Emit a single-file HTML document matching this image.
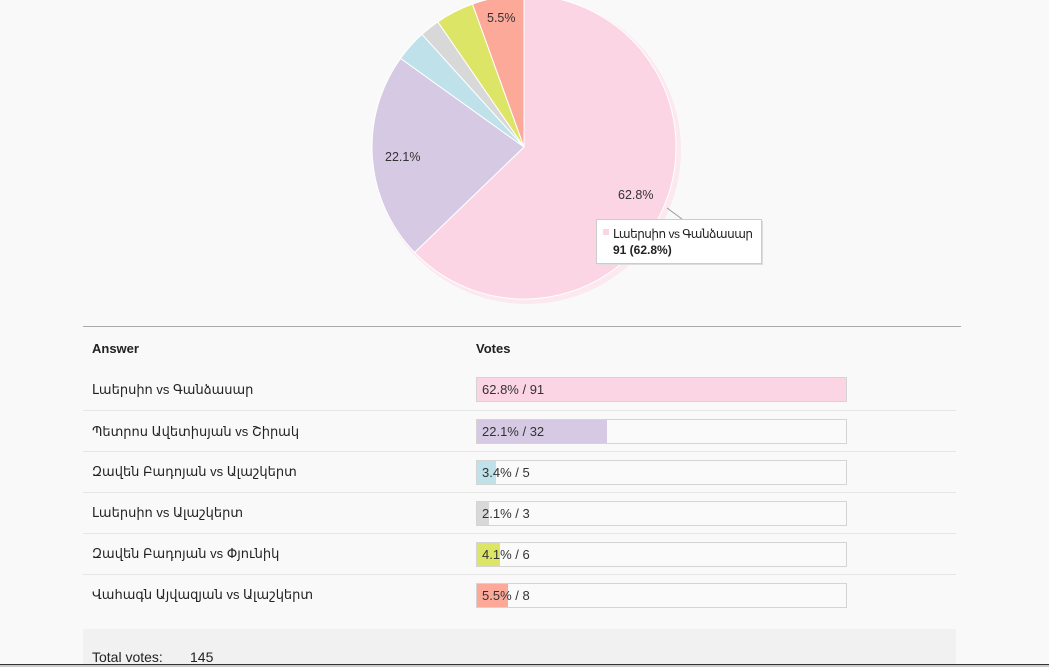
<!DOCTYPE html>
<html><head><meta charset="utf-8"><style>
body{margin:0;width:1049px;height:667px;background:#f9f9f9;overflow:hidden;position:relative;font-family:"Liberation Sans","DejaVu Sans",sans-serif;color:#222}
.a{position:absolute}
.t{font-size:13px;white-space:nowrap}
.bar{position:absolute;left:476px;width:369px;height:23px;border:1px solid #d4d4d4;background:#fafafa}
.bar i{position:absolute;left:0;top:0;bottom:0}
.bar span{position:absolute;left:5px;top:4px;font-size:13px;color:#333}
.sep{position:absolute;left:83px;width:873px;height:1px;background:#e6e6e6}
</style></head><body>
<svg class="a" style="left:0;top:0" width="1049" height="320">
<circle cx="527" cy="150" r="154" fill="#fbe9ef"/>
<g stroke="#fff" stroke-width="1">
<path d="M524 147 L524 -5 A152 152 0 1 1 414.6 252.5Z" fill="#fbd5e4"/>
<path d="M524 147 L414.6 252.5 A152 152 0 0 1 400.5 58.4Z" fill="#d6c9e4"/>
<path d="M524 147 L400.5 58.4 A152 152 0 0 1 422 34.3Z" fill="#bfe1ea"/>
<path d="M524 147 L422 34.3 A152 152 0 0 1 437.8 21.8Z" fill="#d8d8d8"/>
<path d="M524 147 L437.8 21.8 A152 152 0 0 1 472.5 4Z" fill="#dde566"/>
<path d="M524 147 L472.5 4 A152 152 0 0 1 524 -5Z" fill="#fca99a"/>
</g>
<g font-size="12.5" fill="#333" font-family="Liberation Sans,sans-serif">
<text x="487" y="22">5.5%</text>
<text x="385" y="161">22.1%</text>
<text x="618" y="199">62.8%</text>
</g>
<path d="M667 208 L682 219" stroke="#999" fill="none"/>
<rect x="598" y="221" width="165" height="44" fill="#ddd"/>
<rect x="596.5" y="219.5" width="165" height="44" fill="#fff" stroke="#ccc"/>
<rect x="603" y="229" width="6" height="6" fill="#fbd5e4"/>
<text x="613" y="238" font-size="12" fill="#222" textLength="140">Լաերսիո vs Գանձասար</text>
<text x="613" y="254" font-size="12" font-weight="bold" fill="#222">91 (62.8%)</text>
</svg>
<div class="a" style="left:83px;top:326px;width:878px;height:1px;background:#aaa"></div>
<div class="a t" style="left:92px;top:341px;font-weight:bold">Answer</div>
<div class="a t" style="left:476px;top:341px;font-weight:bold">Votes</div>
<div class="a t" style="left:92px;top:382px">Լաերսիո vs Գանձասար</div>
<div class="a t" style="left:92px;top:424px">Պետրոս Ավետիսյան vs Շիրակ</div>
<div class="a t" style="left:92px;top:464px">Զավեն Բադոյան vs Ալաշկերտ</div>
<div class="a t" style="left:92px;top:505px">Լաերսիո vs Ալաշկերտ</div>
<div class="a t" style="left:92px;top:546px">Զավեն Բադոյան vs Փյունիկ</div>
<div class="a t" style="left:92px;top:587px">Վահագն Այվազյան vs Ալաշկերտ</div>
<div class="sep" style="top:410px"></div><div class="sep" style="top:451px"></div><div class="sep" style="top:492px"></div><div class="sep" style="top:533px"></div><div class="sep" style="top:574px"></div>
<div class="bar" style="top:377px"><i style="width:369px;background:#fbd5e4"></i><span>62.8% / 91</span></div>
<div class="bar" style="top:419px"><i style="width:130px;background:#d6c9e4"></i><span>22.1% / 32</span></div>
<div class="bar" style="top:460px"><i style="width:19px;background:#bfe1ea"></i><span>3.4% / 5</span></div>
<div class="bar" style="top:501px"><i style="width:12px;background:#d8d8d8"></i><span>2.1% / 3</span></div>
<div class="bar" style="top:542px"><i style="width:23px;background:#dde566"></i><span>4.1% / 6</span></div>
<div class="bar" style="top:583px"><i style="width:31px;background:#fca99a"></i><span>5.5% / 8</span></div>
<div class="a" style="left:83px;top:629px;width:873px;height:38px;background:#f1f1f1"></div>
<div class="a t" style="left:92px;top:649px;font-size:14px">Total votes:</div>
<div class="a t" style="left:190px;top:649px;font-size:14px">145</div>
<div class="a" style="left:0;top:664px;width:1049px;height:1px;background:#333"></div>
<div class="a" style="left:0;top:665px;width:1049px;height:2px;background:#ccc"></div>
</body></html>
